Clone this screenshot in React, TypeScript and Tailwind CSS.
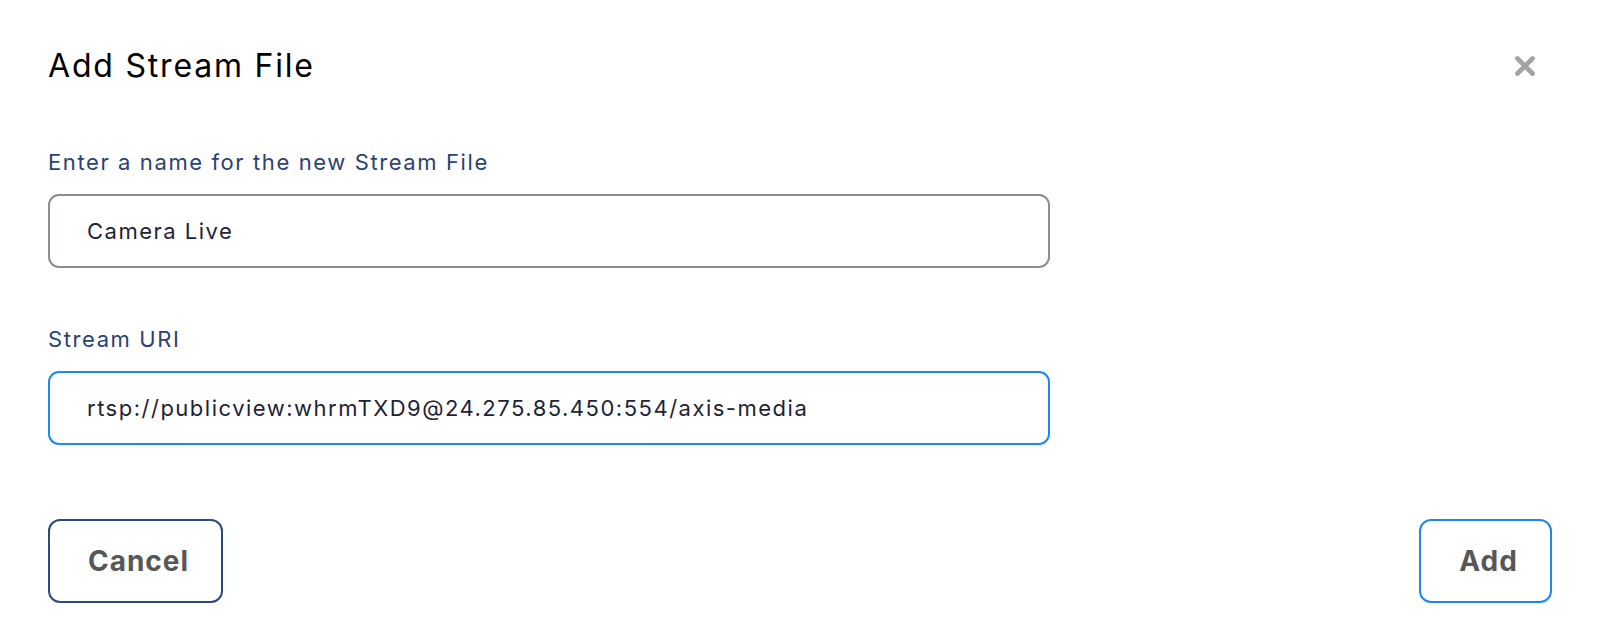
import { X } from 'lucide-react'

const FONT = { fontFamily: 'Inter, "Noto Sans", sans-serif' }

function Field({ label, value, focused }: { label: string; value: string; focused?: boolean }) {
  return (
    <div className="flex flex-col">
      <label className="text-[22px] leading-[30px] tracking-[1.6px] text-[#2c4274]">{label}</label>
      <div
        className={
          focused
            ? 'mt-[17px] w-[1002px] h-[74px] rounded-[11px] border-2 border-[#1e88f0] flex items-center pl-[37px]'
            : 'mt-[17px] w-[1002px] h-[74px] rounded-[11px] border-2 border-[#8b8e9a] flex items-center pl-[37px]'
        }
      >
        <span className="text-[22px] tracking-[1.5px] text-[#1d2437]">{value}</span>
      </div>
    </div>
  )
}

export default function App() {
  return (
    <div className="w-full h-[634px] bg-white pl-[48px] pr-[46px] flex flex-col" style={FONT}>
      {/* Header */}
      <div className="flex items-center justify-between pt-[46px]">
        <h1 className="text-[32px] leading-[40px] tracking-[1.8px] text-black">Add Stream File</h1>
        <X className="w-[30px] h-[30px] text-[#a3a3a3] mr-[12px]" strokeWidth={3.8} />
      </div>

      {/* Fields */}
      <div className="mt-[61px] flex flex-col gap-[56px]">
        <Field label="Enter a name for the new Stream File" value="Camera Live" />
        <Field label="Stream URI" value="rtsp://publicview:whrmTXD9@24.275.85.450:554/axis-media" focused />
      </div>

      {/* Footer */}
      <div className="mt-auto mb-[31px] flex items-center justify-between">
        <button className="w-[175px] h-[84px] pl-[6px] rounded-[12px] border-2 border-[#2b4a82] text-[28px] tracking-[1px] font-bold text-[#575757]">
          Cancel
        </button>
        <button className="w-[133px] h-[84px] pl-[6px] rounded-[12px] border-2 border-[#1e88f0] text-[28px] tracking-[1px] font-bold text-[#575757]">
          Add
        </button>
      </div>
    </div>
  )
}
